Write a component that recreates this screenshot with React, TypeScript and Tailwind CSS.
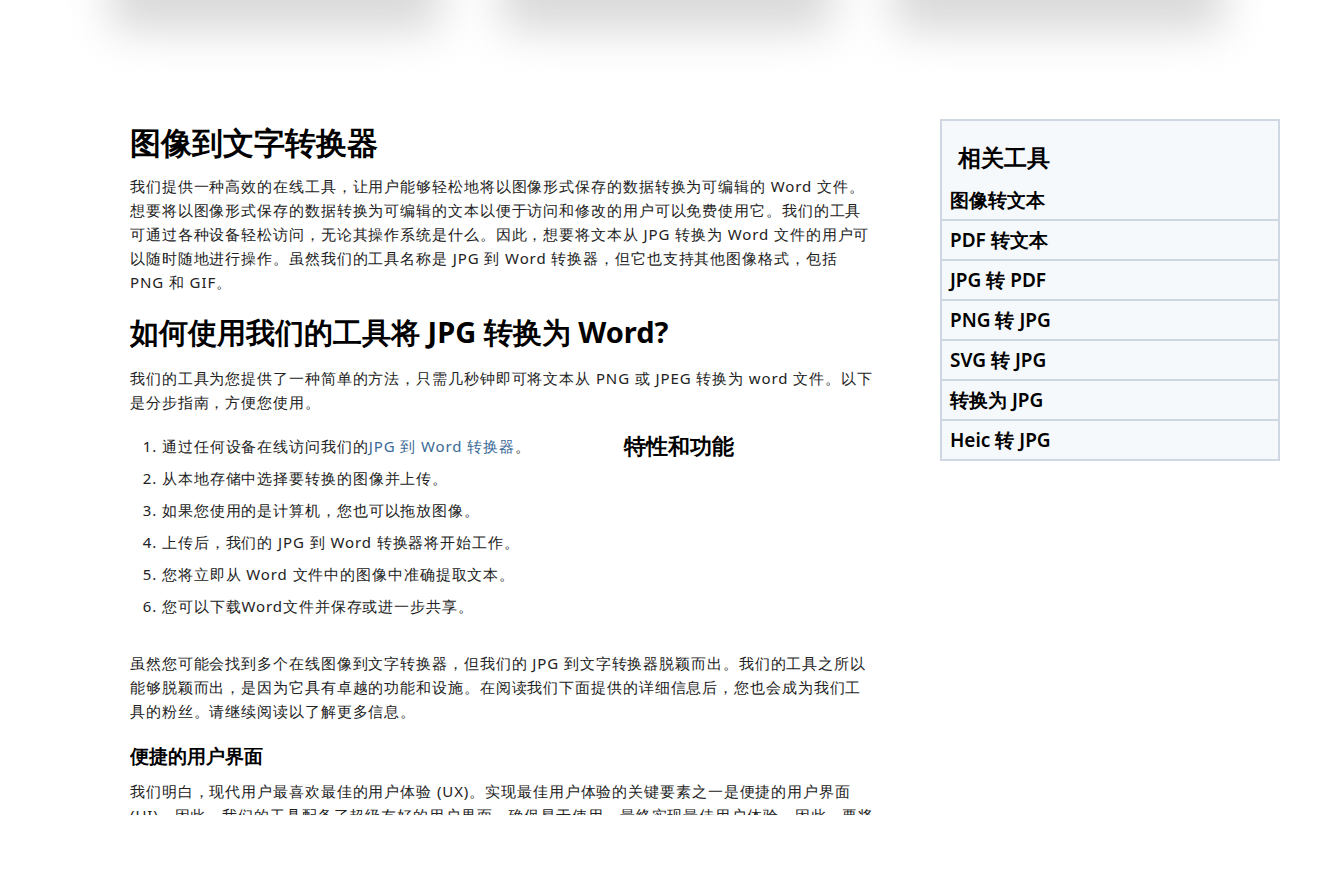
export default function App() {
  const items = ["图像转文本", "PDF 转文本", "JPG 转 PDF", "PNG 转 JPG", "SVG 转 JPG", "转换为 JPG", "Heic 转 JPG"];
  const steps = [
    <>通过任何设备在线访问我们的<span className="text-[#3b6a98]">JPG 到 Word 转换器</span>。</>,
    "从本地存储中选择要转换的图像并上传。",
    "如果您使用的是计算机，您也可以拖放图像。",
    "上传后，我们的 JPG 到 Word 转换器将开始工作。",
    "您将立即从 Word 文件中的图像中准确提取文本。",
    "您可以下载Word文件并保存或进一步共享。",
  ];
  const p = "text-[15px] leading-[24px] tracking-[0.9px]";
  return (
    <div className="relative h-[885px] w-[1334px] overflow-hidden bg-white text-[#222] font-['Noto_Sans_CJK_SC',sans-serif]">
      <div className="absolute left-0 top-0 flex w-full gap-[60px] px-[110px] -translate-y-[40px]">
        <div className="h-[70px] flex-1 rounded-xl bg-[#d8d8d8] blur-[22px]" />
        <div className="h-[70px] flex-1 rounded-xl bg-[#d8d8d8] blur-[22px]" />
        <div className="h-[70px] flex-1 rounded-xl bg-[#d8d8d8] blur-[22px]" />
      </div>
      <div className="flex gap-[65px] pl-[130px] pt-[119px]">
        <div className="h-[696px] w-[745px] overflow-hidden pt-[1px]">
          <h1 className="text-[31px] font-bold leading-[44px] text-black">图像到文字转换器</h1>
          <p className={`mt-[10px] ${p}`}>我们提供一种高效的在线工具，让用户能够轻松地将以图像形式保存的数据转换为可编辑的 Word 文件。想要将以图像形式保存的数据转换为可编辑的文本以便于访问和修改的用户可以免费使用它。我们的工具可通过各种设备轻松访问，无论其操作系统是什么。因此，想要将文本从 JPG 转换为 Word 文件的用户可以随时随地进行操作。虽然我们的工具名称是 JPG 到 Word 转换器，但它也支持其他图像格式，包括 PNG 和 GIF。</p>
          <h2 className="mt-[16px] text-[29px] font-bold leading-[44px] text-black">如何使用我们的工具将 JPG 转换为 Word?</h2>
          <p className={`mt-[12px] ${p}`}>我们的工具为您提供了一种简单的方法，只需几秒钟即可将文本从 PNG 或 JPEG 转换为 word 文件。以下是分步指南，方便您使用。</p>
          <div className="relative mt-[16px]">
            <ol className="list-decimal pl-[32px] text-[15px] leading-[32px] tracking-[0.9px]">
              {steps.map((s, i) => <li key={i}>{s}</li>)}
            </ol>
            <div className="absolute left-[494px] top-[-1px] text-[22px] font-bold text-black">特性和功能</div>
          </div>
          <p className={`mt-[29px] ${p}`}>虽然您可能会找到多个在线图像到文字转换器，但我们的 JPG 到文字转换器脱颖而出。我们的工具之所以能够脱颖而出，是因为它具有卓越的功能和设施。在阅读我们下面提供的详细信息后，您也会成为我们工具的粉丝。请继续阅读以了解更多信息。</p>
          <h3 className="mt-[18px] text-[19px] font-bold leading-[30px] text-black">便捷的用户界面</h3>
          <p className={`mt-[8px] ${p}`}>我们明白，现代用户最喜欢最佳的用户体验 (UX)。实现最佳用户体验的关键要素之一是便捷的用户界面 (UI)。因此，我们的工具配备了超级友好的用户界面，确保易于使用，最终实现最佳用户体验。因此，要将图像转换为文字，您只需几次点击即可完成。</p>
        </div>
        <div className="h-fit w-[340px] border-2 border-[#cfd8e2] bg-[#f6f9fc]">
          <div className="px-[16px] pt-[20px] pb-[8px] text-[23px] font-bold leading-[32px] text-black">相关工具</div>
          {items.map((t, i) => (
            <div key={t} className={`px-[8px] text-[19px] font-semibold leading-[38px] text-black ${i < items.length - 1 ? "border-b-2 border-[#cfd8e2]" : ""}`}>{t}</div>
          ))}
        </div>
      </div>
    </div>
  );
}
